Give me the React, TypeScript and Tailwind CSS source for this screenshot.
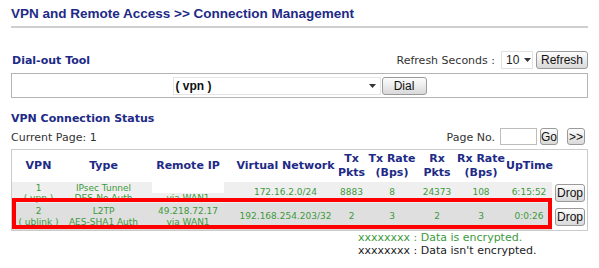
import type { FC, ReactNode } from 'react';

const VERDANA = "font-['DejaVu_Sans',Verdana,sans-serif]";
const ARIAL = "font-['Liberation_Sans',Arial,sans-serif]";

const Btn: FC<{ children: ReactNode; className?: string }> = ({ children, className = '' }) => (
  <div
    className={`${ARIAL} flex items-center justify-center rounded-[3px] border border-[#9a9a9a] bg-gradient-to-b from-[#fdfdfd] to-[#d9d9d9] text-[12px] leading-none text-[#111] ${className}`}
  >
    {children}
  </div>
);

const Arrow: FC = () => (
  <svg width="7" height="4" viewBox="0 0 7 4" className="shrink-0">
    <path d="M0 0h7L3.5 4z" fill="#333" />
  </svg>
);

const cols = [53, 77, 92, 103, 29, 52, 38, 50, 46, 36];

const headers: ReactNode[] = [
  'VPN',
  'Type',
  'Remote IP',
  'Virtual Network',
  <>Tx<br />Pkts</>,
  <>Tx Rate<br />(Bps)</>,
  <>Rx<br />Pkts</>,
  <>Rx Rate<br />(Bps)</>,
  'UpTime',
  '',
];

const rows = [
  {
    bg: 'bg-[#efefef]',
    h: 'h-[20px]',
    lead: 'leading-[10px]',
    vpn: ['1', '( vpn )'],
    type: ['IPsec Tunnel', 'DES-No Auth'],
    ip: [null, 'via WAN1'],
    net: '172.16.2.0/24',
    txp: '8883',
    txr: '8',
    rxp: '24373',
    rxr: '108',
    up: '6:15:52',
  },
  {
    bg: 'bg-[#dfdfdf]',
    h: 'h-[27px]',
    lead: 'leading-[11px]',
    vpn: ['2', '( ublink )'],
    type: ['L2TP', 'AES-SHA1 Auth'],
    ip: ['49.218.72.17', 'via WAN1'],
    net: '192.168.254.203/32',
    txp: '2',
    txr: '3',
    rxp: '2',
    rxr: '3',
    up: '0:0:26',
  },
];

const App: FC = () => {
  return (
    <div className={`${VERDANA} relative h-[268px] w-[599px] overflow-hidden bg-white text-[11px] text-[#333]`}>
      <div className="pl-[11px] pr-[11px]">
        {/* Title */}
        <div className="border-b-2 border-[#cfcfcf] pt-[6px] pb-[4px]">
          <h1 className={`${ARIAL} text-[13.5px] font-bold leading-[16px] text-[#1d2a86]`}>
            VPN and Remote Access &gt;&gt; Connection Management
          </h1>
        </div>

        {/* Dial-out tool header */}
        <div className="mt-[23px] flex h-[18px] items-center justify-between">
          <div className="pl-px pt-[2px] font-bold text-[#1d2a86]">Dial-out Tool</div>
          <div className="flex items-center">
            <span className="pt-[3px]">Refresh Seconds :</span>
            <div className={`${ARIAL} ml-[6px] flex h-[18px] w-[32px] items-center gap-[5px] border border-[#e2e2e2] pl-[4px] text-[12px] text-[#222]`}>
              10
              <Arrow />
            </div>
            <Btn className="ml-[3px] h-[18px] w-[52px]">Refresh</Btn>
          </div>
        </div>

        {/* Dial-out box */}
        <div className="mt-[4px] flex h-[25px] items-center justify-center border border-[#b4b4b4] bg-white">
          <div className={`${ARIAL} flex h-[18px] w-[208px] items-center justify-between border border-[#e4e4e4] pl-[2px] pr-[4px] text-[12px] font-bold text-[#111]`}>
            ( vpn )
            <Arrow />
          </div>
          <Btn className="ml-px h-[18px] w-[45px]">Dial</Btn>
        </div>

        {/* Status header */}
        <div className="mt-[14px] font-bold leading-[14px] text-[#1d2a86]">VPN Connection Status</div>
        <div className="mt-[1px] flex h-[19px] items-center justify-between">
          <span className="pt-[3px]">Current Page: 1</span>
          <div className="flex items-center">
            <span className="pt-[4px]">Page No.</span>
            <div className="ml-[5px] h-[17px] w-[37px] border border-[#bdbdbd] bg-white" />
            <Btn className="ml-[3px] h-[17px] w-[18px]">Go</Btn>
            <Btn className="ml-[9px] mr-[3px] h-[17px] w-[18px] text-[10px]">&gt;&gt;</Btn>
          </div>
        </div>

        {/* Table */}
        <div className="mt-[3px] border border-[#cbcbcb]">
          <table className="table-fixed border-collapse text-center" style={{ width: 576 }}>
            <colgroup>
              {cols.map((w, i) => (
                <col key={i} style={{ width: w }} />
              ))}
            </colgroup>
            <thead>
              <tr className="h-[32px]">
                {headers.map((h, i) => (
                  <th key={i} className="p-0 align-middle text-[11px] font-bold leading-[14px] whitespace-nowrap text-[#1d2a86]">
                    {h}
                  </th>
                ))}
              </tr>
            </thead>
            <tbody className="text-[9px] text-[#3c9a3c]">
              {rows.map((r, i) => (
                <tr key={i} className={r.h}>
                  <td className={`${r.bg} ${r.lead} p-0 whitespace-nowrap`}>
                    {r.vpn[0]}
                    <br />
                    {r.vpn[1]}
                  </td>
                  <td className={`${r.bg} ${r.lead} p-0 whitespace-nowrap`}>
                    {r.type[0]}
                    <br />
                    {r.type[1]}
                  </td>
                  <td className={`${r.bg} ${r.lead} p-0 whitespace-nowrap`}>
                    {r.ip[0] ?? <span className="mx-auto block h-[11px] w-[72px] bg-white" />}
                    {r.ip[0] && <br />}
                    {r.ip[1]}
                  </td>
                  <td className={`${r.bg} p-0 whitespace-nowrap`}>{r.net}</td>
                  <td className={`${r.bg} p-0`}>{r.txp}</td>
                  <td className={`${r.bg} p-0`}>{r.txr}</td>
                  <td className={`${r.bg} p-0`}>{r.rxp}</td>
                  <td className={`${r.bg} p-0`}>{r.rxr}</td>
                  <td className={`${r.bg} p-0`}>{r.up}</td>
                  <td className="p-0">
                    <Btn className="ml-[3px] h-[18px] w-[30px]">Drop</Btn>
                  </td>
                </tr>
              ))}
            </tbody>
          </table>
        </div>

        {/* Legend */}
        <div className="mt-0 pl-[347px] leading-[13px]">
          <div className="text-[#3c9a3c]">xxxxxxxx : Data is encrypted.</div>
          <div className="text-[#222]">xxxxxxxx : Data isn't encrypted.</div>
        </div>
      </div>

      {/* Red annotation frame */}
      <div className="absolute left-[12px] top-[198px] h-[31px] w-[540px] border-[4px] border-[#ff0000]" />
    </div>
  );
};

export default App;
